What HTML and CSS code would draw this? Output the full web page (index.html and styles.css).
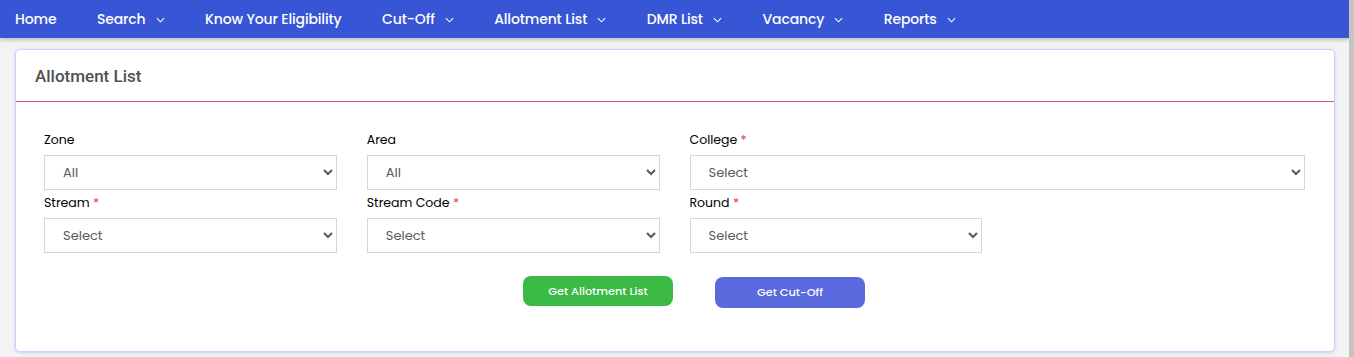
FILE: index.html
```html
<!DOCTYPE html>
<html lang="en">
<head>
<meta charset="utf-8">
<title>Allotment List</title>
<link rel="stylesheet" href="styles.css">
</head>
<body>
<nav class="topnav">
  <a class="nav-item">Home</a>
  <a class="nav-item">Search <svg class="chev" viewBox="0 0 10 6"><path d="M1 1l4 4 4-4"/></svg></a>
  <a class="nav-item">Know Your Eligibility</a>
  <a class="nav-item">Cut-Off <svg class="chev" viewBox="0 0 10 6"><path d="M1 1l4 4 4-4"/></svg></a>
  <a class="nav-item">Allotment List <svg class="chev" viewBox="0 0 10 6"><path d="M1 1l4 4 4-4"/></svg></a>
  <a class="nav-item">DMR List <svg class="chev" viewBox="0 0 10 6"><path d="M1 1l4 4 4-4"/></svg></a>
  <a class="nav-item">Vacancy <svg class="chev" viewBox="0 0 10 6"><path d="M1 1l4 4 4-4"/></svg></a>
  <a class="nav-item">Reports <svg class="chev" viewBox="0 0 10 6"><path d="M1 1l4 4 4-4"/></svg></a>
</nav>
<main class="page">
  <section class="card">
    <header class="card-header"><h2>Allotment List</h2></header>
    <div class="card-body">
      <div class="form-grid">
        <div class="field">
          <label>Zone</label>
          <select><option>All</option></select>
        </div>
        <div class="field">
          <label>Area</label>
          <select><option>All</option></select>
        </div>
        <div class="field span2">
          <label>College <span class="req">*</span></label>
          <select><option>Select</option></select>
        </div>
        <div class="field">
          <label>Stream <span class="req">*</span></label>
          <select><option>Select</option></select>
        </div>
        <div class="field">
          <label>Stream Code <span class="req">*</span></label>
          <select><option>Select</option></select>
        </div>
        <div class="field">
          <label>Round <span class="req">*</span></label>
          <select><option>Select</option></select>
        </div>
      </div>
      <div class="actions">
        <button class="btn btn-green">Get Allotment List</button>
        <button class="btn btn-blue">Get Cut-Off</button>
      </div>
    </div>
  </section>
</main>
</body>
</html>
```
FILE: styles.css
```css
html {
  background: #f3f3f3;
  border-right: 5px solid #c4c4c4;
  height: 357px;
  overflow: hidden;
}
body {
  margin: 0;
  background: #f3f3f3;
  font-family: Poppins, "Open Sans", "Liberation Sans", sans-serif;
}
.topnav {
  height: 38px;
  padding-top: 1px;
  box-sizing: border-box;
  background: #3755d4;
  display: flex;
  align-items: center;
  padding-left: 15px;
  gap: 40.5px;
  box-shadow: 0 2px 4px rgba(0,0,0,0.22);
}
.nav-item {
  color: #fff;
  font-size: 14px;
  letter-spacing: -0.14px;
  font-weight: 500;
  display: flex;
  align-items: center;
  gap: 10px;
  white-space: nowrap;
}
.chev {
  width: 9px;
  height: 6px;
  fill: none;
  stroke: #fff;
  stroke-width: 1.2;
}
.page {
  padding: 11px 14px 6px 15px;
}
.card {
  background: #fff;
  border: 1px solid #c9d1fb;
  border-radius: 5px;
  box-shadow: 0 1px 3px rgba(120,140,250,0.35);
  height: 301px;
}
.card-header {
  height: 51px;
  border-bottom: 1px solid #d9546b;
  display: flex;
  align-items: center;
  padding-left: 19px;
}
.card-header h2 {
  margin: 0;
  font-family: Roboto, "Liberation Sans", sans-serif;
  font-size: 17px;
  font-weight: 500;
  color: #505050;
}
.card-body {
  padding: 28px 29px 0 28px;
}
.form-grid {
  display: grid;
  grid-template-columns: repeat(4, 1fr);
  column-gap: 30px;
  row-gap: 3px;
}
.field { display: flex; flex-direction: column; }
.span2 { grid-column: span 2; }
.field label {
  font-size: 12.5px;
  font-weight: 400;
  color: #000;
  line-height: 20px;
  margin-bottom: 5px;
}
.req { color: #e03a4e; }
.field select {
  height: 35px;
  border: 1px solid #d6d6d6;
  border-radius: 0;
  background: #fff;
  padding: 0 14px 0 14px;
  font-family: inherit;
  font-size: 13px;
  color: #5a5a5a;
}
.actions {
  display: flex;
  gap: 42px;
  padding-left: 479px;
  margin-top: 23px;
}
.btn {
  width: 150px;
  height: 30px;
  border: none;
  border-radius: 8px;
  color: #fff;
  font-family: inherit;
  font-size: 11.3px;
  font-weight: 500;
}
.btn-green { background: #3ab944; }
.btn-blue { background: #5a6ade; height: 31px; margin-top: 1px; }
```
